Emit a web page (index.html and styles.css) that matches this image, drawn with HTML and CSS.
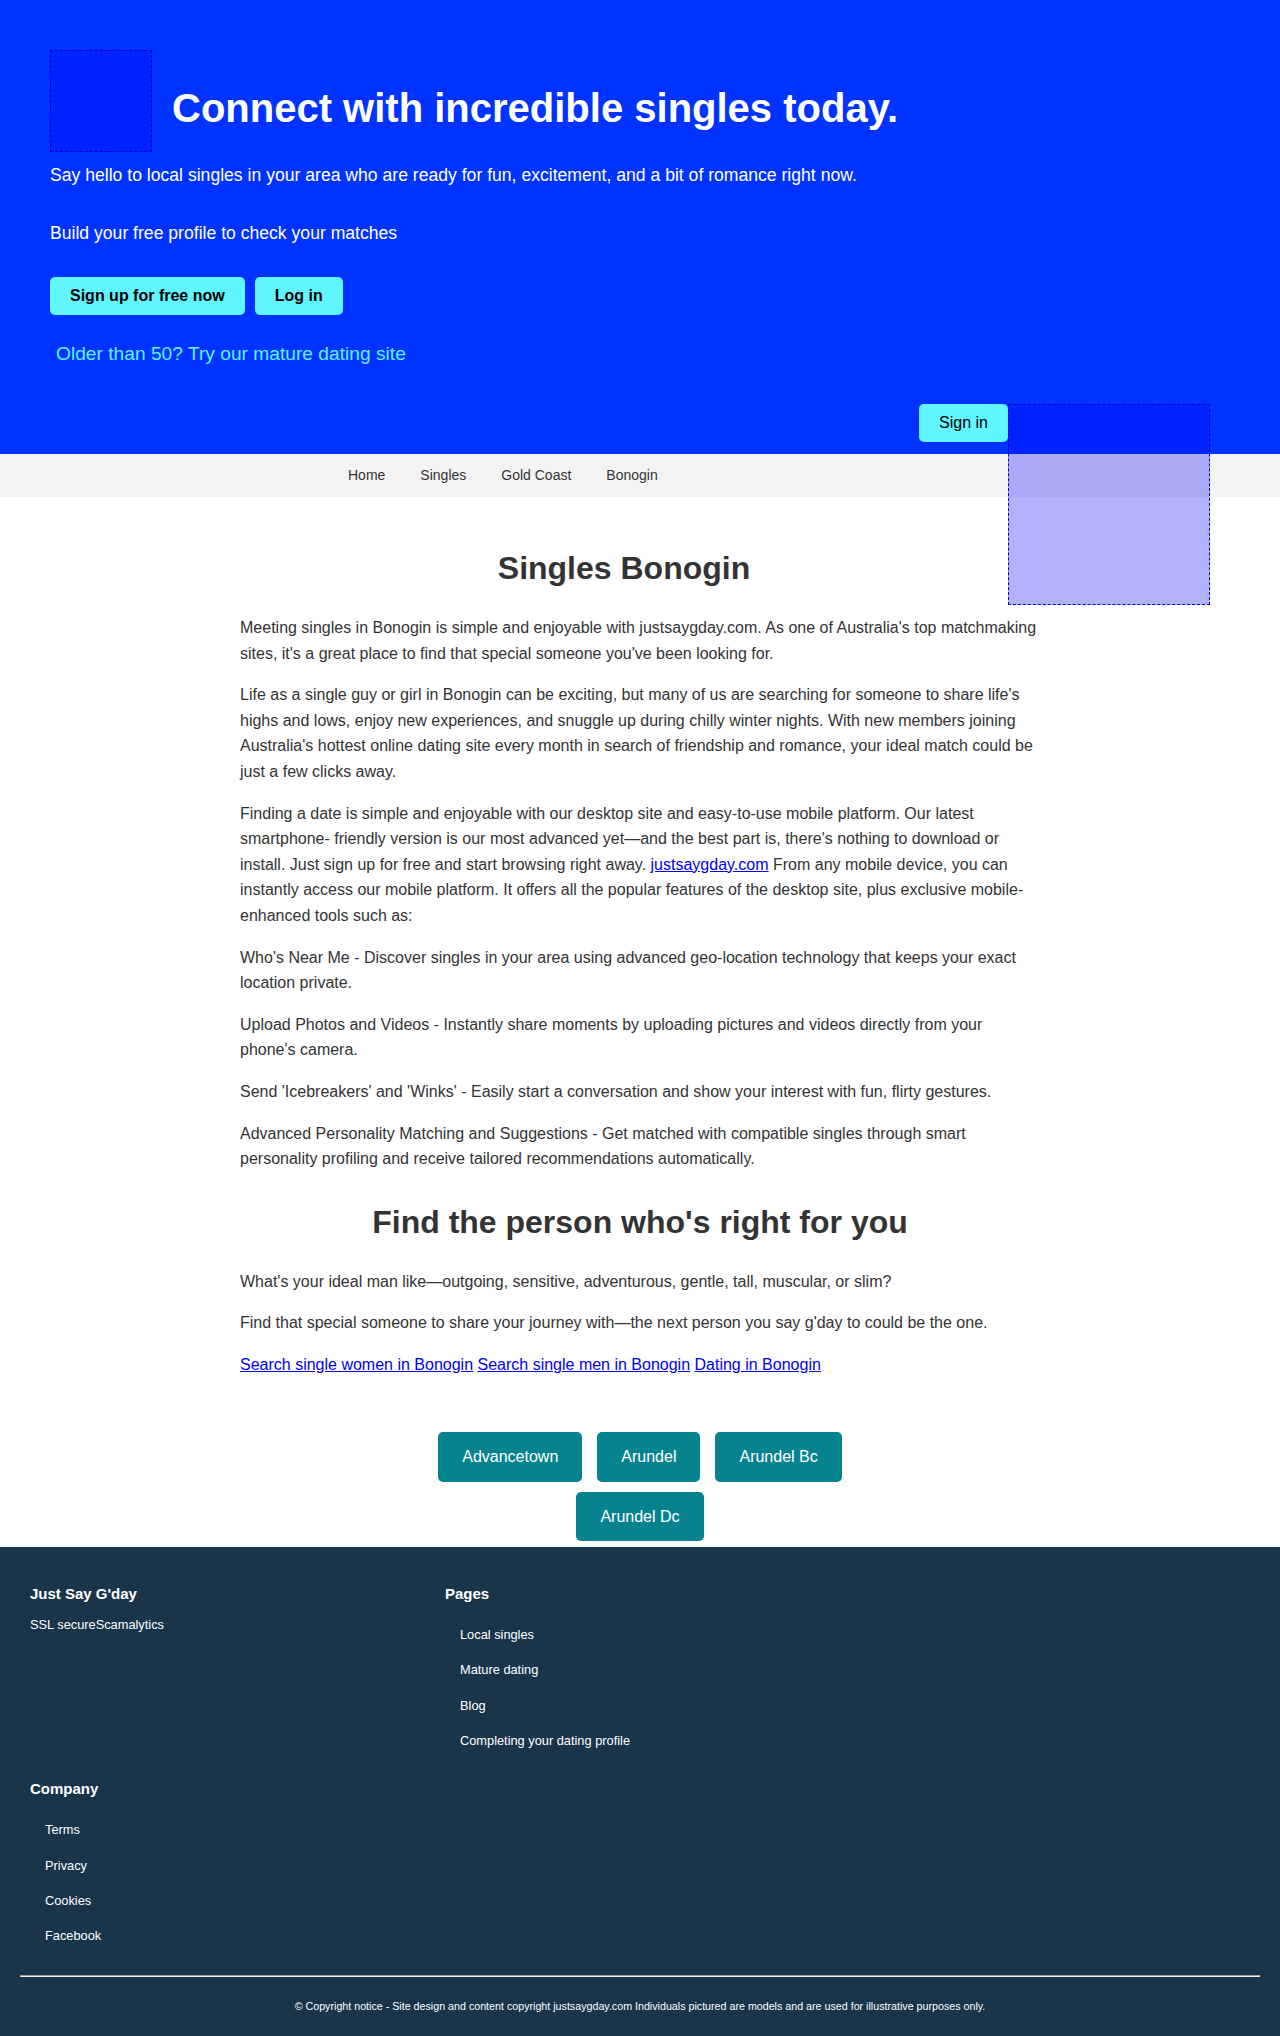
FILE: index.html
```html
<!DOCTYPE html>
<html lang="en">
<head>
<meta charset="utf-8">
<title>Singles Bonogin</title>
<link rel="stylesheet" href="styles.css">
</head>
<body>
<header class="hero">
  <div class="hero-top">
    <div class="logo-img" aria-label="logo"></div>
    <h1 class="hero-title">Connect with incredible singles today.</h1>
  </div>
  <p class="hero-lead">Say hello to local singles in your area who are ready for fun, excitement, and a bit of romance right now.</p>
  <p class="hero-sub">Build your free profile to check your matches</p>
  <div class="hero-actions">
    <a class="btn-cyan btn-bold" href="#">Sign up for free now</a>
    <a class="btn-cyan btn-bold" href="#">Log in</a>
  </div>
  <a class="older-link" href="#">Older than 50? Try our mature dating site</a>
  <div class="signin-row">
    <a class="btn-cyan" href="#">Sign in</a>
    <div class="photo-slot"><div class="photo-img"></div></div>
  </div>
</header>

<nav class="main-nav">
  <ul class="nav-list">
    <li><a href="#">Home</a></li>
    <li><a href="#">Singles</a></li>
    <li><a href="#">Gold Coast</a></li>
    <li><a href="#">Bonogin</a></li>
  </ul>
</nav>

<main class="content">
  <h2 class="section-title section-title-first">Singles Bonogin</h2>
  <p>Meeting singles in Bonogin is simple and enjoyable with justsaygday.com. As one of Australia's top matchmaking sites, it's a great place to find that special someone you've been looking for.</p>
  <p>Life as a single guy or girl in Bonogin can be exciting, but many of us are searching for someone to share life's highs and lows, enjoy new experiences, and snuggle up during chilly winter nights. With new members joining Australia's hottest online dating site every month in search of friendship and romance, your ideal match could be just a few clicks away.</p>
  <p>Finding a date is simple and enjoyable with our desktop site and easy-to-use mobile platform. Our latest smartphone- friendly version is our most advanced yet—and the best part is, there's nothing to download or install. Just sign up for free and start browsing right away. <a href="#">justsaygday.com</a> From any mobile device, you can instantly access our mobile platform. It offers all the popular features of the desktop site, plus exclusive mobile-enhanced tools such as:</p>
  <p>Who's Near Me - Discover singles in your area using advanced geo-location technology that keeps your exact location private.</p>
  <p>Upload Photos and Videos - Instantly share moments by uploading pictures and videos directly from your phone's camera.</p>
  <p>Send 'Icebreakers' and 'Winks' - Easily start a conversation and show your interest with fun, flirty gestures.</p>
  <p>Advanced Personality Matching and Suggestions - Get matched with compatible singles through smart personality profiling and receive tailored recommendations automatically.</p>
  <h2 class="section-title">Find the person who's right for you</h2>
  <p>What's your ideal man like—outgoing, sensitive, adventurous, gentle, tall, muscular, or slim?</p>
  <p>Find that special someone to share your journey with—the next person you say g'day to could be the one.</p>
  <p><a href="#">Search single women in Bonogin</a> <a href="#">Search single men in Bonogin</a> <a href="#">Dating in Bonogin</a></p>
</main>

<div class="cities">
  <a class="city-btn" href="#">Advancetown</a>
  <a class="city-btn" href="#">Arundel</a>
  <a class="city-btn" href="#">Arundel Bc</a>
  <a class="city-btn" href="#">Arundel Dc</a>
</div>

<footer class="site-footer">
  <div class="footer-grid">
    <div class="footer-col">
      <h4 class="footer-heading">Just Say G'day</h4>
      <p class="footer-text">SSL secureScamalytics</p>
    </div>
    <div class="footer-col">
      <h4 class="footer-heading">Pages</h4>
      <ul class="footer-list">
        <li>Local singles</li>
        <li>Mature dating</li>
        <li>Blog</li>
        <li>Completing your dating profile</li>
      </ul>
    </div>
    <div class="footer-col">
      <h4 class="footer-heading">Company</h4>
      <ul class="footer-list">
        <li>Terms</li>
        <li>Privacy</li>
        <li>Cookies</li>
        <li>Facebook</li>
      </ul>
    </div>
  </div>
  <hr class="footer-rule">
  <p class="copyright">© Copyright notice - Site design and content copyright justsaygday.com Individuals pictured are models and are used for illustrative purposes only.</p>
</footer>
</body>
</html>
```

FILE: styles.css
```css
* { box-sizing: border-box; }

body {
  margin: 0;
  font-family: "Liberation Sans", Arial, sans-serif;
  color: #333;
  background: #fff;
}

/* HERO */
.hero {
  background: #0033ff;
  color: #fff;
  padding: 50px 70px 12px 50px;
}
.hero-top {
  display: flex;
  align-items: flex-start;
}
.logo-img {
  width: 102px;
  height: 102px;
  flex: 0 0 auto;
  background: rgba(0, 0, 255, 0.3);
  border: 1px dashed #0000cc;
}
.hero-title {
  margin: 36px 0 0 20px;
  font-size: 40px;
  font-weight: bold;
  line-height: normal;
  color: #fff;
}
.hero-lead {
  margin: 13px 0 0;
  font-size: 17.6px;
  line-height: normal;
}
.hero-sub {
  margin: 37px 0 0;
  font-size: 17.6px;
  line-height: normal;
}
.hero-actions {
  margin-top: 33px;
  display: flex;
  gap: 10px;
}
.btn-cyan {
  display: inline-block;
  background: #60f6ff;
  color: #000;
  text-decoration: none;
  font-size: 16px;
  line-height: 18px;
  padding: 10px 20px;
  border-radius: 5px;
}
.btn-bold { font-weight: bold; }
.older-link {
  display: block;
  margin-top: 28px;
  padding-left: 6px;
  font-size: 19.2px;
  line-height: normal;
  color: #5ff4ff;
  text-decoration: none;
}
.signin-row {
  margin-top: 39px;
  display: flex;
  justify-content: flex-end;
}
.photo-slot {
  position: relative;
  width: 202px;
}
.photo-img {
  position: absolute;
  top: 0;
  left: 0;
  width: 202px;
  height: 201px;
  background: rgba(0, 0, 255, 0.3);
  border: 1px dashed #0000cc;
  z-index: 10;
}

/* NAV */
.main-nav {
  background: #f3f3f3;
  height: 43px;
  display: flex;
  align-items: center;
  padding-bottom: 2px;
}
.nav-list {
  list-style: none;
  margin: 0 0 0 348px;
  padding: 0;
  display: flex;
  gap: 35px;
}
.nav-list a {
  color: #333;
  text-decoration: none;
  font-size: 14px;
}

/* CONTENT */
.content {
  max-width: 800px;
  margin: 0 auto;
  padding-top: 21px;
}
.section-title {
  margin: 32px 0 28px;
  font-size: 32px;
  line-height: normal;
  text-align: center;
  color: #333;
}
.section-title-first {
  padding-right: 32px;
}
.content p {
  margin: 16px 0;
  font-size: 16px;
  line-height: 1.6;
  color: #333;
}
.content a { color: #0000ee; text-decoration: underline; }

/* CITY BUTTONS */
.cities {
  max-width: 500px;
  margin: 0 auto;
  padding: 39px 0 6px;
  display: flex;
  flex-wrap: wrap;
  justify-content: center;
  gap: 10px 15px;
}
.city-btn {
  background: #07838f;
  color: #fff;
  text-decoration: none;
  font-size: 16px;
  line-height: 1.2;
  padding: 15px 24px;
  border-radius: 5px;
}

/* FOOTER */
.site-footer {
  background: #1a344a;
  color: #fff;
  padding: 38px 20px 0;
}
.footer-grid {
  padding-left: 10px;
  display: grid;
  grid-template-columns: 415px 415px;
  row-gap: 22px;
}
.footer-heading {
  margin: 0 0 15px;
  font-size: 15px;
  line-height: normal;
  font-weight: bold;
}
.footer-text {
  margin: 0;
  font-size: 12.8px;
  line-height: normal;
}
.footer-heading + .footer-text { margin-top: 8px; }
.footer-list {
  list-style: none;
  margin: 0;
  padding: 0;
}
.footer-list li {
  padding: 10px 15px;
  font-size: 12.8px;
  line-height: 1.2;
}
.footer-rule {
  margin: 21px 0 0;
}
.copyright {
  margin: 0;
  padding: 23px 0 25px;
  text-align: center;
  font-size: 10.7px;
  line-height: normal;
}
```
